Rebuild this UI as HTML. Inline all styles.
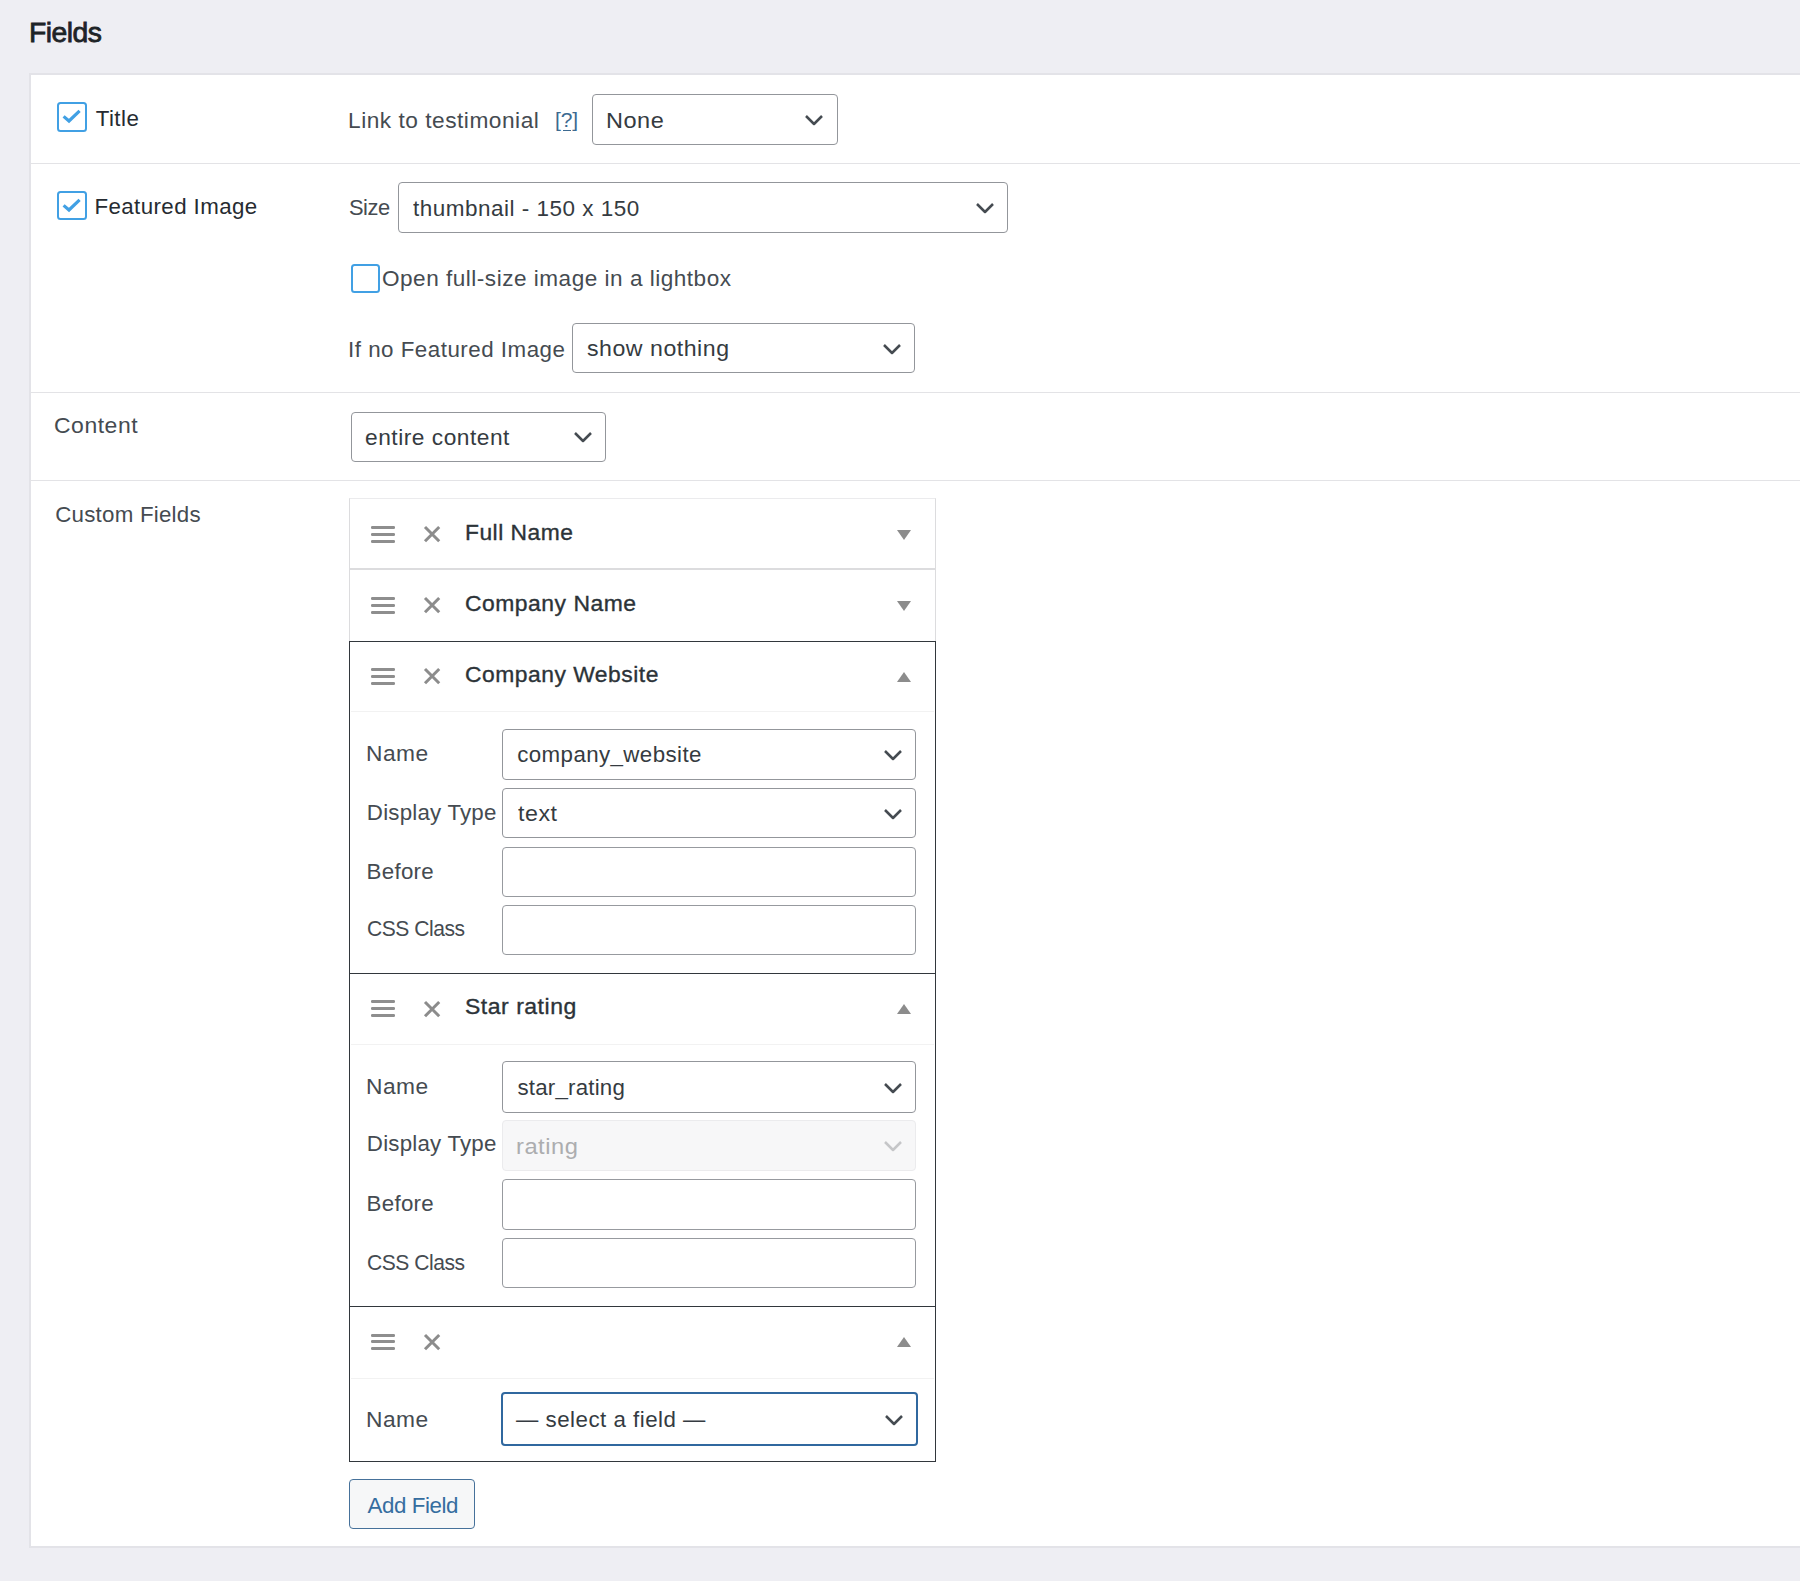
<!DOCTYPE html><html><head><meta charset="utf-8"><style>
html,body{margin:0;padding:0;width:1800px;height:1581px;overflow:hidden;background:#eeeef3;font-family:"Liberation Sans",sans-serif}
.t{position:absolute;white-space:pre}
.b{position:absolute}
</style></head><body>
<div class="t" style="left:29.3px;top:10.52px;font-size:28.5px;line-height:43px;font-weight:400;color:#1d2327;letter-spacing:-0.500px;transform:scaleX(0.9928);transform-origin:0 0;-webkit-text-stroke:0.8px #1d2327;">Fields</div>
<div class="b" style="left:28.6px;top:73px;width:1791.4px;height:1474.6px;background:#fff;border:2px solid #e3e3e8;box-sizing:border-box"></div>
<div class="b" style="left:30px;top:163px;width:1770px;height:1.3000000000000114px;background:#e3e3e6"></div>
<div class="b" style="left:30px;top:392px;width:1770px;height:1.3000000000000114px;background:#e3e3e6"></div>
<div class="b" style="left:30px;top:480px;width:1770px;height:1.3000000000000114px;background:#e3e3e6"></div>
<div class="b" style="left:57.2px;top:102.2px;width:29.5px;height:29.5px;border:2.8px solid #41a0e4;border-radius:3.5px;box-sizing:border-box;background:#fff"></div>
<svg class="b" style="left:57.2px;top:102.2px" width="29.5" height="29.5"><path d="M6.6 14.4 L12 19 L22.6 8.9" fill="none" stroke="#41a0e4" stroke-width="3.2" stroke-linecap="butt" stroke-linejoin="miter"/></svg>
<div class="t" style="left:95.64px;top:101.77px;font-size:22.3px;line-height:33px;font-weight:400;color:#262b31;letter-spacing:0.500px;">Title</div>
<div class="t" style="left:348.4px;top:103.77px;font-size:22.3px;line-height:33px;font-weight:400;color:#454b51;letter-spacing:0.500px;transform:scaleX(1.0178);transform-origin:0 0;">Link to testimonial</div>
<div class="t" style="left:555.12px;top:104.22px;font-size:21px;line-height:32px;font-weight:400;color:#3d6a90;letter-spacing:-0.230px;">[?]</div>
<div class="b" style="left:563px;top:129.6px;width:7.5px;height:1.8000000000000114px;background:#3d6a90"></div>
<div class="b" style="left:591.9px;top:93.9px;width:245.70000000000005px;height:50.69999999999999px;border:1.2px solid #93969b;border-radius:4px;background:#fff;box-sizing:border-box"></div>
<div class="t" style="left:606.4px;top:103.52px;font-size:22.3px;line-height:33px;font-weight:400;color:#353b41;letter-spacing:0.500px;transform:scaleX(1.0545);transform-origin:0 0;">None</div>
<svg class="b" style="left:803.2px;top:112.75px" width="22" height="14"><path d="M3 3 L11.0 11 L19 3" fill="none" stroke="#454b51" stroke-width="2.5" stroke-linecap="butt" stroke-linejoin="round"/></svg>
<div class="b" style="left:57.2px;top:190.5px;width:29.5px;height:29.5px;border:2.8px solid #41a0e4;border-radius:3.5px;box-sizing:border-box;background:#fff"></div>
<svg class="b" style="left:57.2px;top:190.5px" width="29.5" height="29.5"><path d="M6.6 14.4 L12 19 L22.6 8.9" fill="none" stroke="#41a0e4" stroke-width="3.2" stroke-linecap="butt" stroke-linejoin="miter"/></svg>
<div class="t" style="left:94.48px;top:189.77px;font-size:22.3px;line-height:33px;font-weight:400;color:#262b31;letter-spacing:0.408px;">Featured Image</div>
<div class="t" style="left:349.04px;top:191.27px;font-size:22.3px;line-height:33px;font-weight:400;color:#454b51;letter-spacing:-0.500px;transform:scaleX(0.9810);transform-origin:0 0;">Size</div>
<div class="b" style="left:397.7px;top:182.0px;width:610.4000000000001px;height:51.0px;border:1.2px solid #93969b;border-radius:4px;background:#fff;box-sizing:border-box"></div>
<div class="t" style="left:413.0px;top:191.77px;font-size:22.3px;line-height:33px;font-weight:400;color:#353b41;letter-spacing:0.500px;transform:scaleX(1.0077);transform-origin:0 0;">thumbnail - 150 x 150</div>
<svg class="b" style="left:973.7px;top:201.0px" width="22" height="14"><path d="M3 3 L11.0 11 L19 3" fill="none" stroke="#454b51" stroke-width="2.5" stroke-linecap="butt" stroke-linejoin="round"/></svg>
<div class="b" style="left:351.1px;top:263.6px;width:29px;height:29px;border:2.8px solid #41a0e4;border-radius:3.5px;box-sizing:border-box;background:#fff"></div>
<div class="t" style="left:382.48px;top:261.97px;font-size:22.3px;line-height:33px;font-weight:400;color:#454b51;letter-spacing:0.500px;transform:scaleX(1.0118);transform-origin:0 0;">Open full-size image in a lightbox</div>
<div class="t" style="left:348.04px;top:332.77px;font-size:22.3px;line-height:33px;font-weight:400;color:#454b51;letter-spacing:0.500px;transform:scaleX(1.0021);transform-origin:0 0;">If no Featured Image</div>
<div class="b" style="left:572.4px;top:322.9px;width:342.70000000000005px;height:50.200000000000045px;border:1.2px solid #93969b;border-radius:4px;background:#fff;box-sizing:border-box"></div>
<div class="t" style="left:586.8399999999999px;top:332.27px;font-size:22.3px;line-height:33px;font-weight:400;color:#353b41;letter-spacing:0.500px;transform:scaleX(1.0372);transform-origin:0 0;">show nothing</div>
<svg class="b" style="left:880.7px;top:341.5px" width="22" height="14"><path d="M3 3 L11.0 11 L19 3" fill="none" stroke="#454b51" stroke-width="2.5" stroke-linecap="butt" stroke-linejoin="round"/></svg>
<div class="t" style="left:54.480000000000004px;top:408.97px;font-size:22.3px;line-height:33px;font-weight:400;color:#454b51;letter-spacing:0.500px;transform:scaleX(1.0304);transform-origin:0 0;">Content</div>
<div class="b" style="left:350.59999999999997px;top:411.59999999999997px;width:255.7000000000001px;height:50.200000000000045px;border:1.2px solid #93969b;border-radius:4px;background:#fff;box-sizing:border-box"></div>
<div class="t" style="left:364.65999999999997px;top:420.97px;font-size:22.3px;line-height:33px;font-weight:400;color:#353b41;letter-spacing:0.500px;transform:scaleX(1.0199);transform-origin:0 0;">entire content</div>
<svg class="b" style="left:571.9000000000001px;top:430.2px" width="22" height="14"><path d="M3 3 L11.0 11 L19 3" fill="none" stroke="#454b51" stroke-width="2.5" stroke-linecap="butt" stroke-linejoin="round"/></svg>
<div class="t" style="left:55.28px;top:497.57px;font-size:22.3px;line-height:33px;font-weight:400;color:#454b51;letter-spacing:0.232px;">Custom Fields</div>
<div class="b" style="left:348.9px;top:497.8px;width:587.0px;height:143.7px;border:1px solid #dcdcde;border-top-color:#ebebed;border-bottom:none;box-sizing:border-box;background:#fff"></div>
<div class="b" style="left:348.9px;top:568.3px;width:587.0px;height:1.3000000000000682px;background:#dcdcde"></div>
<div class="b" style="left:371.2px;top:525.8px;width:24.0px;height:3.0px;background:#8e8e8e;border-radius:1.2px"></div>
<div class="b" style="left:371.2px;top:532.6999999999999px;width:24.0px;height:3.0px;background:#8e8e8e;border-radius:1.2px"></div>
<div class="b" style="left:371.2px;top:539.5999999999999px;width:24.0px;height:3.0px;background:#8e8e8e;border-radius:1.2px"></div>
<svg class="b" style="left:422.79999999999995px;top:525.4px" width="18.2" height="18.2"><path d="M2 2 L16.2 16.2 M16.2 2 L2 16.2" stroke="#8c8c8c" stroke-width="3"/></svg>
<div class="t" style="left:465.44px;top:515.60px;font-size:22.5px;line-height:34px;font-weight:400;color:#2c3338;letter-spacing:0.500px;transform:scaleX(1.0134);transform-origin:0 0;-webkit-text-stroke:0.35px #2c3338;">Full Name</div>
<svg class="b" style="left:896.7px;top:529.5px" width="14" height="10"><path d="M0 0 L7.0 10 L14 0 Z" fill="#8c8c8c"/></svg>
<div class="b" style="left:371.2px;top:596.8px;width:24.0px;height:3.0px;background:#8e8e8e;border-radius:1.2px"></div>
<div class="b" style="left:371.2px;top:603.6999999999999px;width:24.0px;height:3.0px;background:#8e8e8e;border-radius:1.2px"></div>
<div class="b" style="left:371.2px;top:610.5999999999999px;width:24.0px;height:3.0px;background:#8e8e8e;border-radius:1.2px"></div>
<svg class="b" style="left:422.79999999999995px;top:596.4px" width="18.2" height="18.2"><path d="M2 2 L16.2 16.2 M16.2 2 L2 16.2" stroke="#8c8c8c" stroke-width="3"/></svg>
<div class="t" style="left:465.28px;top:586.60px;font-size:22.5px;line-height:34px;font-weight:400;color:#2c3338;letter-spacing:0.500px;transform:scaleX(1.0176);transform-origin:0 0;-webkit-text-stroke:0.35px #2c3338;">Company Name</div>
<svg class="b" style="left:896.7px;top:600.5px" width="14" height="10"><path d="M0 0 L7.0 10 L14 0 Z" fill="#8c8c8c"/></svg>
<div class="b" style="left:348.75px;top:641px;width:587.3px;height:332.5px;border:1.3px solid #32373c;box-sizing:border-box;background:#fff"></div>
<div class="b" style="left:371.2px;top:667.8px;width:24.0px;height:3.0px;background:#8e8e8e;border-radius:1.2px"></div>
<div class="b" style="left:371.2px;top:674.6999999999999px;width:24.0px;height:3.0px;background:#8e8e8e;border-radius:1.2px"></div>
<div class="b" style="left:371.2px;top:681.5999999999999px;width:24.0px;height:3.0px;background:#8e8e8e;border-radius:1.2px"></div>
<svg class="b" style="left:422.79999999999995px;top:667.4px" width="18.2" height="18.2"><path d="M2 2 L16.2 16.2 M16.2 2 L2 16.2" stroke="#8c8c8c" stroke-width="3"/></svg>
<div class="t" style="left:465.28px;top:657.60px;font-size:22.5px;line-height:34px;font-weight:400;color:#2c3338;letter-spacing:0.500px;transform:scaleX(1.0154);transform-origin:0 0;-webkit-text-stroke:0.35px #2c3338;">Company Website</div>
<svg class="b" style="left:896.7px;top:671.5px" width="14" height="10"><path d="M0 10 L7.0 0 L14 10 Z" fill="#8c8c8c"/></svg>
<div class="b" style="left:350.9px;top:711px;width:583.0px;height:1.2000000000000455px;background:#f2f2f2"></div>
<div class="t" style="left:366.12px;top:736.77px;font-size:22.3px;line-height:33px;font-weight:400;color:#454b51;letter-spacing:0.500px;transform:scaleX(1.0209);transform-origin:0 0;">Name</div>
<div class="b" style="left:501.7px;top:728.6px;width:414.50000000000006px;height:51.200000000000045px;border:1.2px solid #93969b;border-radius:4px;background:#fff;box-sizing:border-box"></div>
<div class="t" style="left:517.28px;top:738.47px;font-size:22.3px;line-height:33px;font-weight:400;color:#353b41;letter-spacing:0.403px;">company_website</div>
<svg class="b" style="left:881.8000000000001px;top:747.7px" width="22" height="14"><path d="M3 3 L11.0 11 L19 3" fill="none" stroke="#454b51" stroke-width="2.5" stroke-linecap="butt" stroke-linejoin="round"/></svg>
<div class="t" style="left:366.84000000000003px;top:795.77px;font-size:22.3px;line-height:33px;font-weight:400;color:#454b51;letter-spacing:0.208px;">Display Type</div>
<div class="b" style="left:501.7px;top:787.6999999999999px;width:414.50000000000006px;height:50.700000000000045px;border:1.2px solid #93969b;border-radius:4px;background:#fff;box-sizing:border-box"></div>
<div class="t" style="left:517.6px;top:797.32px;font-size:22.3px;line-height:33px;font-weight:400;color:#353b41;letter-spacing:0.500px;transform:scaleX(1.0413);transform-origin:0 0;">text</div>
<svg class="b" style="left:881.8000000000001px;top:806.55px" width="22" height="14"><path d="M3 3 L11.0 11 L19 3" fill="none" stroke="#454b51" stroke-width="2.5" stroke-linecap="butt" stroke-linejoin="round"/></svg>
<div class="t" style="left:366.6px;top:854.77px;font-size:22.3px;line-height:33px;font-weight:400;color:#454b51;letter-spacing:0.279px;">Before</div>
<div class="b" style="left:501.7px;top:847.1px;width:414.50000000000006px;height:50.0px;border:1.2px solid #979a9f;border-radius:4px;background:#fff;box-sizing:border-box"></div>
<div class="t" style="left:366.6px;top:912.47px;font-size:22.3px;line-height:33px;font-weight:400;color:#454b51;letter-spacing:-0.500px;transform:scaleX(0.9451);transform-origin:0 0;">CSS Class</div>
<div class="b" style="left:501.7px;top:904.8px;width:414.50000000000006px;height:50.30000000000007px;border:1.2px solid #979a9f;border-radius:4px;background:#fff;box-sizing:border-box"></div>
<div class="b" style="left:348.75px;top:972.5px;width:587.3px;height:334.0px;border:1.3px solid #32373c;box-sizing:border-box;background:#fff"></div>
<div class="b" style="left:371.2px;top:1000.05px;width:24.0px;height:3.0px;background:#8e8e8e;border-radius:1.2px"></div>
<div class="b" style="left:371.2px;top:1006.9499999999999px;width:24.0px;height:3.0px;background:#8e8e8e;border-radius:1.2px"></div>
<div class="b" style="left:371.2px;top:1013.8499999999999px;width:24.0px;height:3.0px;background:#8e8e8e;border-radius:1.2px"></div>
<svg class="b" style="left:422.79999999999995px;top:999.65px" width="18.2" height="18.2"><path d="M2 2 L16.2 16.2 M16.2 2 L2 16.2" stroke="#8c8c8c" stroke-width="3"/></svg>
<div class="t" style="left:465.2px;top:989.85px;font-size:22.5px;line-height:34px;font-weight:400;color:#2c3338;letter-spacing:0.500px;transform:scaleX(1.0223);transform-origin:0 0;-webkit-text-stroke:0.35px #2c3338;">Star rating</div>
<svg class="b" style="left:896.7px;top:1003.75px" width="14" height="10"><path d="M0 10 L7.0 0 L14 10 Z" fill="#8c8c8c"/></svg>
<div class="b" style="left:350.9px;top:1044px;width:583.0px;height:1.2000000000000455px;background:#f2f2f2"></div>
<div class="t" style="left:366.12px;top:1069.77px;font-size:22.3px;line-height:33px;font-weight:400;color:#454b51;letter-spacing:0.500px;transform:scaleX(1.0209);transform-origin:0 0;">Name</div>
<div class="b" style="left:501.7px;top:1061.4px;width:414.50000000000006px;height:51.19999999999982px;border:1.2px solid #93969b;border-radius:4px;background:#fff;box-sizing:border-box"></div>
<div class="t" style="left:517.46px;top:1071.27px;font-size:22.3px;line-height:33px;font-weight:400;color:#353b41;letter-spacing:0.200px;">star_rating</div>
<svg class="b" style="left:881.8000000000001px;top:1080.5px" width="22" height="14"><path d="M3 3 L11.0 11 L19 3" fill="none" stroke="#454b51" stroke-width="2.5" stroke-linecap="butt" stroke-linejoin="round"/></svg>
<div class="t" style="left:366.84000000000003px;top:1127.37px;font-size:22.3px;line-height:33px;font-weight:400;color:#454b51;letter-spacing:0.208px;">Display Type</div>
<div class="b" style="left:501.7px;top:1120.4px;width:414.50000000000006px;height:50.69999999999982px;border:1.2px solid #ebebed;border-radius:4px;background:#f7f7f8;box-sizing:border-box"></div>
<div class="t" style="left:515.86px;top:1130.02px;font-size:22.3px;line-height:33px;font-weight:400;color:#acadaf;letter-spacing:0.500px;transform:scaleX(1.0617);transform-origin:0 0;">rating</div>
<svg class="b" style="left:881.8000000000001px;top:1139.25px" width="22" height="14"><path d="M3 3 L11.0 11 L19 3" fill="none" stroke="#c5c6c8" stroke-width="2.5" stroke-linecap="butt" stroke-linejoin="round"/></svg>
<div class="t" style="left:366.6px;top:1187.27px;font-size:22.3px;line-height:33px;font-weight:400;color:#454b51;letter-spacing:0.279px;">Before</div>
<div class="b" style="left:501.7px;top:1179.4px;width:414.50000000000006px;height:50.19999999999982px;border:1.2px solid #979a9f;border-radius:4px;background:#fff;box-sizing:border-box"></div>
<div class="t" style="left:366.6px;top:1245.77px;font-size:22.3px;line-height:33px;font-weight:400;color:#454b51;letter-spacing:-0.500px;transform:scaleX(0.9451);transform-origin:0 0;">CSS Class</div>
<div class="b" style="left:501.7px;top:1237.9px;width:414.50000000000006px;height:50.19999999999982px;border:1.2px solid #979a9f;border-radius:4px;background:#fff;box-sizing:border-box"></div>
<div class="b" style="left:348.75px;top:1305.5px;width:587.3px;height:156.0px;border:1.3px solid #32373c;box-sizing:border-box;background:#fff"></div>
<div class="b" style="left:371.2px;top:1333.55px;width:24.0px;height:3.0px;background:#8e8e8e;border-radius:1.2px"></div>
<div class="b" style="left:371.2px;top:1340.45px;width:24.0px;height:3.0px;background:#8e8e8e;border-radius:1.2px"></div>
<div class="b" style="left:371.2px;top:1347.35px;width:24.0px;height:3.0px;background:#8e8e8e;border-radius:1.2px"></div>
<svg class="b" style="left:422.79999999999995px;top:1333.15px" width="18.2" height="18.2"><path d="M2 2 L16.2 16.2 M16.2 2 L2 16.2" stroke="#8c8c8c" stroke-width="3"/></svg>
<svg class="b" style="left:896.7px;top:1337.25px" width="14" height="10"><path d="M0 10 L7.0 0 L14 10 Z" fill="#8c8c8c"/></svg>
<div class="b" style="left:350.9px;top:1378px;width:583.0px;height:1.2000000000000455px;background:#f2f2f2"></div>
<div class="t" style="left:366.12px;top:1402.77px;font-size:22.3px;line-height:33px;font-weight:400;color:#454b51;letter-spacing:0.500px;transform:scaleX(1.0209);transform-origin:0 0;">Name</div>
<div class="b" style="left:501.09999999999997px;top:1391.8px;width:416.8px;height:54.700000000000045px;border:2.6px solid #30689f;border-radius:4px;background:#fff;box-sizing:border-box"></div>
<div class="t" style="left:516.1px;top:1403.42px;font-size:22.3px;line-height:33px;font-weight:400;color:#353b41;letter-spacing:0.493px;">— select a field —</div>
<svg class="b" style="left:882.8000000000001px;top:1412.65px" width="22" height="14"><path d="M3 3 L11.0 11 L19 3" fill="none" stroke="#454b51" stroke-width="2.5" stroke-linecap="butt" stroke-linejoin="round"/></svg>
<div class="b" style="left:348.8px;top:1479.0px;width:126.39999999999998px;height:49.90000000000009px;border:1.3px solid #46719a;border-radius:4px;background:#f6f7f8;box-sizing:border-box"></div>
<div class="t" style="left:367.54px;top:1488.67px;font-size:22.3px;line-height:33px;font-weight:400;color:#356d9f;letter-spacing:-0.410px;">Add Field</div>
</body></html>
